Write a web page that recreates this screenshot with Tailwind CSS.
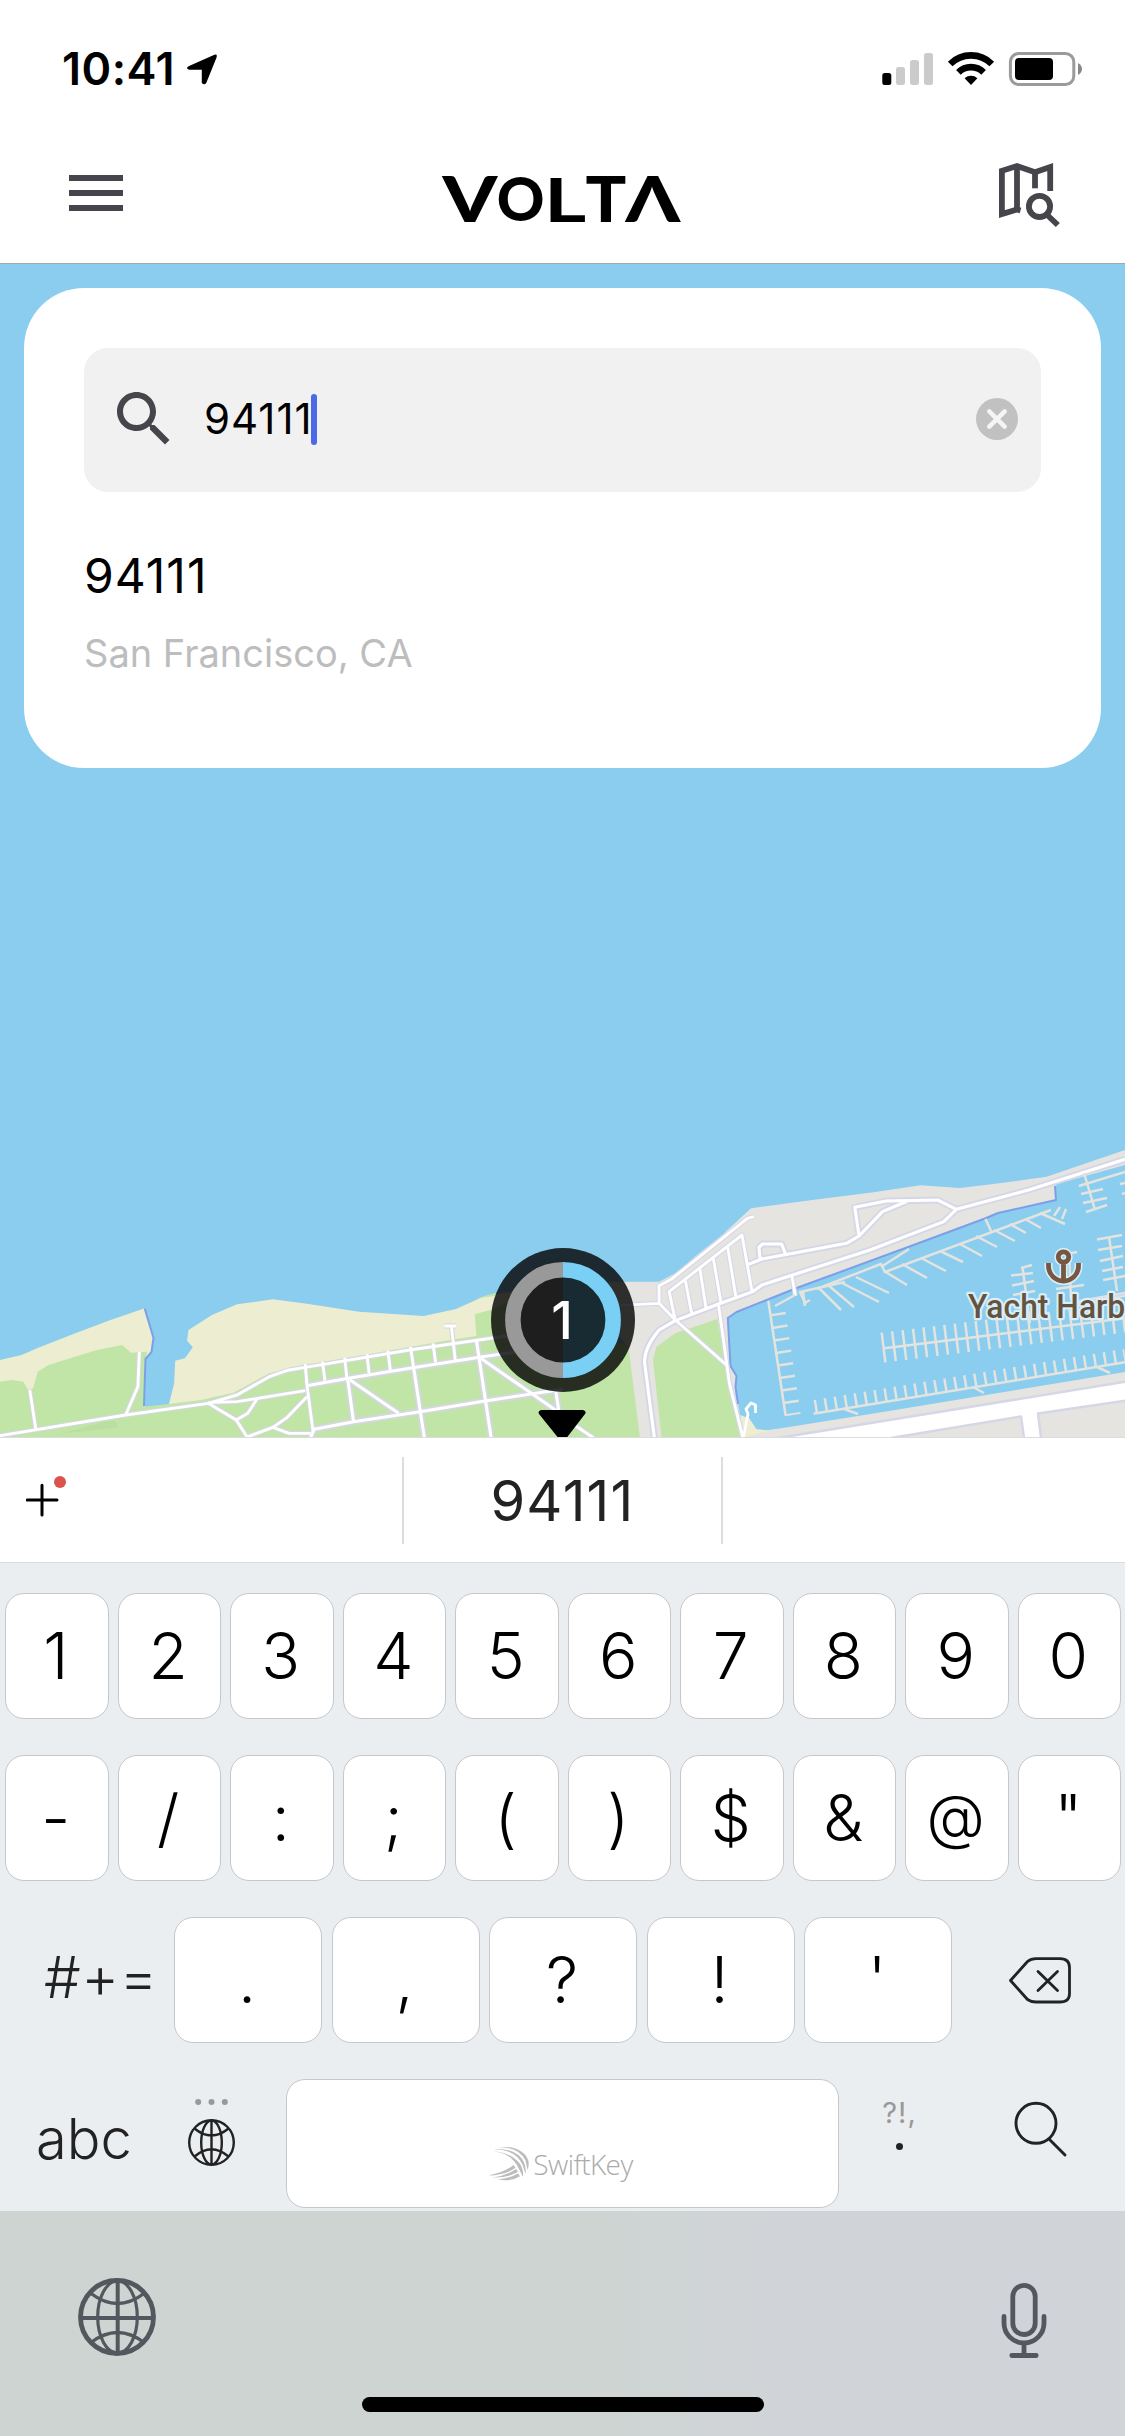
<!DOCTYPE html>
<html lang="en">
<head>
<meta charset="utf-8">
<title>Volta</title>
<script src="https://cdn.jsdelivr.net/npm/@tailwindcss/browser@4"></script>
</head>
<body class="w-[1125px] h-[2436px] overflow-hidden bg-white font-['Inter',sans-serif] text-black flex flex-col">

<!-- Status bar -->
<div class="h-[132px] shrink-0 flex items-start justify-between pl-[62px] pr-[43px]">
  <div class="flex items-start">
    <span class="mt-[42px] h-[54px] leading-[54px] text-[45px] font-semibold tracking-[0.5px]">10:41</span>
    <svg class="ml-[11px] mt-[53px]" width="32" height="32" viewBox="187 53 31 31"><path d="M190 65.5 L214.5 54.6 Q217.6 53.6 216.6 57.3 L206.6 82 Q204.9 84.6 202.3 82 V69.2 H190 Q186 67.5 190 65.5Z"/></svg>
  </div>
  <svg class="mt-[48px]" width="202" height="42" viewBox="880 48 202 42">
    <rect x="882.3" y="73" width="9" height="12" rx="2.5"/>
    <g fill="#cbcbcb"><rect x="896" y="67" width="9" height="18" rx="2.5"/><rect x="910" y="60" width="9" height="25" rx="2.5"/><rect x="924" y="53" width="9" height="32" rx="2.5"/></g>
    <g fill="none" stroke="#000" stroke-width="6.6">
      <path d="M950.2 64 A29.5 29.5 0 0 1 991.8 64"/>
      <path d="M958.4 72.3 A18 18 0 0 1 983.600 72.3"/>
    </g>
    <path d="M964.6 78.3 A9.5 9.5 0 0 1 977.4 78.3 L971 85Z"/>
    <rect x="1010.4" y="53.4" width="63.4" height="31.2" rx="8.5" fill="none" stroke="#9b9b9b" stroke-width="3"/>
    <rect x="1015" y="58" width="38" height="22" rx="4"/>
    <path d="M1078 63 Q1082 65.500 1082 69 Q1082 72.500 1078 75Z" fill="#888"/>
  </svg>
</div>

<!-- App header -->
<header class="h-[132px] shrink-0 flex items-start justify-between pl-[69px] pr-[63px] border-b border-[#a3a7ab]">
  <div class="mt-[43px] w-[54px] flex flex-col gap-[9px]">
    <div class="h-[6px] bg-[#46454b]"></div>
    <div class="h-[6px] bg-[#46454b]"></div>
    <div class="h-[6px] bg-[#46454b]"></div>
  </div>
  <svg class="mt-[18px]" width="250" height="100" viewBox="437 150 250 100" font-family="Lato" font-weight="900" font-size="62">
    <text transform="translate(443.400 221.500) scale(1.26 1)">V</text>
    <text transform="translate(497.700 221.300) scale(.95 .97)">O</text>
    <text transform="translate(545 221.500) scale(1.310 1)" font-weight="700">L</text>
    <text transform="translate(586.500 221.500) scale(1.09 1)">T</text>
    <text transform="translate(626.600 221.500) scale(1.26 1)">Λ</text>
  </svg>
  <svg class="mt-[30px]" width="64" height="68" viewBox="998 162 64 68" fill="none" stroke="#46454b" stroke-width="5.8">
    <path d="M1020.500 210.500 L1017 209.500 L1001.900 214 V170.800 L1017 166 L1035 172.300 L1050.200 167 V191"/>
    <path d="M1017 166 V210"/><path d="M1035 172 V188.300"/>
    <circle cx="1039.500" cy="206.400" r="10.600"/><path d="M1046.700 214.500 L1057.800 225"/>
  </svg>
</header>

<!-- Map -->
<main class="relative h-[1173px] shrink-0 bg-[#8bcdee] overflow-hidden">
  <svg class="absolute inset-0" width="1125" height="1173" viewBox="0 264 1125 1173" fill="none" stroke-linecap="butt" stroke-linejoin="round">
    <!-- western shore -->
    <g transform="translate(0 1130) scale(.35907 .33333)">
      <path fill="#ededd1" d="M0 690 L60 675 110 652 210 610 300 573 403 535 428 620 422 665 405 685 403 925 H0Z"/>
      <path fill="#ededd1" d="M400 925 L470 825 485 760 488 692 515 685 537 652 521 632 525 600 590 555 660 523 760 508 860 522 1000 545 1180 558 1270 537 1350 498 1400 490 1568 450 V925Z"/>
      <path fill="#c0e5a6" d="M0 755 L35 750 65 755 78 780 92 775 105 725 135 705 200 683 270 660 340 645 365 668 410 665 405 690 400 830 470 822 560 810 650 788 750 730 850 706 1000 678 1240 632 1327 618 1322 553 1372 538 1440 500 1568 480 V925 H0Z"/>
      <path fill="#c0e5a6" d="M1330 505 L1380 488 V498Z"/>
      <path fill="#bbdfa1" d="M165 912 L290 875 320 872 330 892 Z"/>
    </g>
    <!-- eastern shore -->
    <g transform="translate(560 1130) scale(.36036 .33333)">
      <path fill="#c0e5a6" d="M-20 640 H230 V925 H-20Z"/>
      <path fill="#e5e4e1" d="M-60 520 L120 455 275 455 320 430 380 375 450 315 530 235 700 210 870 187 1000 166 1110 174 1220 160 1350 140 1568 60 V105 L1375 163 1378 210 1215 250 1180 265 970 350 660 472 490 545 465 565 473 710 490 740 487 770 500 860 510 925 H222 L190 650 150 600Z"/>
      <path fill="#c0e5a6" d="M268 650 L320 610 437 567 470 760 500 925 H282 L258 690Z"/>
      <path fill="#e5e4e1" d="M505 925 L560 903 640 890 900 845 1568 726 V925Z"/>
      <path fill="#ededd1" d="M500 855 L525 865 545 897 580 902 520 920 510 925Z"/>
      <path fill="#e5e4e1" d="M1440 510 L1568 485 V500 L1440 528Z"/>
    </g>
    <g stroke="#7b9fe8" stroke-width="2">
      <path d="M144.700 1308.500 L153.500 1338 151.500 1352 145.500 1359 144 1406"/>
      <path d="M1055 1186 L1056 1200 998 1213 985 1218.500 909.500 1246.500 798 1287.500 736.500 1312 727.800 1318 730.500 1366 736.500 1376 735.500 1387 738 1404"/>
    </g>
    <!-- street grid: casing, then surface -->
    <g id="west" transform="translate(0 1130) scale(.35907 .33333)" stroke="#d3d7de">
      <g id="w"><path vector-effect="non-scaling-stroke" d="M0 917 L350 855 580 820 660 795 750 740 805 720 850 712 1140 660 1430 615 M580 818 L660 815 850 782 M850 702 L855 767 872 905 M898 695 L905 752 M960 683 L966 745 M1022 672 L1028 730 M1080 662 L1087 720 M1143 650 L1152 713 M1206 640 L1213 697 M1257 588 L1268 690 M1238 588 H1270 M580 820 L658 870 688 921 760 892 805 910 H865 M658 870 L690 850 715 808 M760 892 L800 862 855 800 M83 780 L100 900 M388 665 L384 770 350 855"/>
      <path vector-effect="non-scaling-stroke" d="M855 767 L970 745 1150 713 1335 682 1460 662 M862 930 L875 898 985 875 1170 845 1350 813 1568 778 M968 745 L985 878 M1152 713 L1182 925 M1327 632 L1368 925 M975 750 L1110 850 M1335 682 L1560 850 M1548 785 L1556 840"/></g>
    </g>
    <g id="east" transform="translate(560 1130) scale(.36036 .33333)" stroke="#d5d7e6">
      <g id="e"><path vector-effect="non-scaling-stroke" d="M100 530 L275 520 275 467 310 447 520 265 538 260 M275 520 L320 570 462 705 M440 525 L455 640 470 760 508 925 M320 572 L303 485 505 315 533 485 M465 350 L488 500 M425 383 L447 520 M388 415 L405 533 M348 452 L365 548 M643 435 L653 497 M40 885 L95 925"/>
      <path vector-effect="non-scaling-stroke" d="M262 925 L235 700 Q232 655 275 600 L320 572 440 522 535 485 560 465 860 360 1065 275 1100 238 1300 180 1568 88 M1100 238 L1048 210 905 213 818 232 830 318 895 245 965 213 M830 318 L795 340 560 387 523 403 M555 385 L552 352 562 342 H615 L625 370"/></g>
      <path vector-effect="non-scaling-stroke" stroke-width="2" d="M1440 520 L1568 493"/>
    </g>
    <!-- boulevard -->
    <path fill="#fff" stroke="#d5d7e6" stroke-width="2.500" d="M775 1438.500 L1130 1381 V1400 L1038 1413.500 1042 1445 H1025 L1021 1416.500 888 1438.500Z"/>
    <!-- piers -->
    <g stroke="#e3e3df" stroke-width="2.500">
      <path d="M884.300 1348.300 L1125 1318.300 M813.500 1413.800 L1125 1362.300 M768.300 1300.700 L785.600 1415.500 M1084 1173 L1095 1210 M1079 1186 L1125 1172 M1109 1237 L1117 1291 M1022.500 1267 L1030 1323 M1069 1252 L1071 1300"/>
      <path d="M816.500 1289 L881 1264 885 1272 1051 1210 M805 1303 L800 1292 845 1282 M881 1267 L909 1249 M985.500 1219 L991 1231 M775 1306 L795 1295 M844 1409 L858 1414 M973 1387 L984 1393 M1097 1367 L1110 1373"/>
      <path d="M818 1287 L841 1310 M828 1285 L854 1307 M842 1283 L879 1302 M856 1277 L889 1293 M884 1271 L907 1285 M902 1264 L927 1278 M921 1258 L946 1271 M940 1251 L963 1262 M960 1244 L982 1256 M976 1236 L997 1247 M994 1230 L1015 1241 M1010 1224 L1026 1233 M1025 1219 L1041 1228 M1040 1213 L1065 1224 M1054 1216 L1060 1207 M1062 1219 L1066 1209 M805 1303 L810 1300 M805 1306 L803 1291"/>
      <path d="M1081 1194 L1103 1189 M1083 1203 L1107 1198 M1086 1212 L1107 1205 M1120 1184 L1125 1183 M1122 1194 L1125 1193 M1097 1239.500 L1122 1235 M1098 1250 L1122 1246 M1100 1261 L1123 1256 M1102 1271 L1123 1267 M1103 1280 L1125 1276 M1021 1268 L1032 1265 M1011 1275.500 L1033 1273 M1012 1285.500 L1034 1281 M1013 1295 L1035 1291 M1061 1255 L1077 1252 M1056 1289 L1084 1285"/>
      <path stroke-width="30" stroke-dasharray="2.500 8.010" d="M882.300 1347.700 L1125 1317.500"/>
      <path stroke-width="13" stroke-dasharray="2.500 7.600" d="M814.600 1406.500 L1125 1355.300"/>
      <path stroke-width="15.500" stroke-dasharray="2.500 10.150" d="M777.800 1313 L793 1415"/>
    </g>
    <path stroke="#fff" stroke-width="2.800" d="M743.500 1437 L748 1414 746 1409 751 1403 755.500 1405 V1413"/>
    <!-- harbour label -->
    <g font-family="Roboto" font-weight="500" font-size="33" stroke="#d9eef6" stroke-width="4.500" fill="#655341" paint-order="stroke">
      <text transform="translate(968 1317.500) scale(.965 1)">Yacht Harbor</text>
    </g>
    <g fill="none" stroke-linecap="butt">
      <path stroke="#d9eef6" stroke-width="8" d="M1063.500 1262 V1281 M1048.500 1263 V1266 A15 15 0 0 0 1078.500 1266 V1263 M1063.500 1251.800 A5.200 5.200 0 1 0 1063.500 1262.200 A5.200 5.200 0 1 0 1063.500 1251.800"/>
      <path stroke="#765741" stroke-width="4.800" d="M1063.500 1262 V1281 M1048.500 1263 V1266 A15 15 0 0 0 1078.500 1266 V1263 M1063.500 1251.800 A5.200 5.200 0 1 0 1063.500 1262.200 A5.200 5.200 0 1 0 1063.500 1251.800"/>
    </g>
    <!-- station marker -->
    <circle cx="563" cy="1320" r="72" fill="#000" fill-opacity=".8"/>
    <path fill="#1e1e1e" d="M563 1262 A58 58 0 0 0 563 1378Z"/>
    <path fill="#182a32" d="M563 1262 A58 58 0 0 1 563 1378Z"/>
    <path stroke="#999" stroke-width="15.500" d="M563 1269.800 A50.200 50.200 0 0 0 563 1370.200"/>
    <path stroke="#7ad0f4" stroke-width="15.500" d="M563 1269.800 A50.200 50.200 0 0 1 563 1370.200"/>
    <text x="562" y="1339" text-anchor="middle" fill="#fff" font-family="Inter" font-weight="500" font-size="52">1</text>
    <path fill="#000" d="M541 1410 H583 Q587 1411 585 1414 L565 1440 H560 L539 1414 Q537.500 1411 541 1410Z"/>
  </svg>

  <!-- Search card -->
  <section class="relative mt-[24px] mx-[24px] h-[480px] rounded-[60px] bg-white px-[60px] pt-[60px]">
    <div class="h-[144px] w-[957px] rounded-[24px] bg-[#f1f1f1] flex items-center pl-[24px] pr-[23px] pb-[2px]">
      <svg width="72" height="72" viewBox="0 0 24 24" fill="#46454b"><path d="M15.500 14h-.790l-.280-.270C15.410 12.590 16 11.110 16 9.500 16 5.910 13.090 3 9.500 3S3 5.910 3 9.500 5.910 16 9.500 16c1.610 0 3.090-.590 4.230-1.570l.270.280v.790l5 4.990L20.490 19l-4.990-5zm-6 0C7.010 14 5 11.990 5 9.500S7.010 5 9.500 5 14 7.010 14 9.500 11.990 14 9.500 14z"/></svg>
      <span class="ml-[24px] w-[107px] text-[42px] leading-[50px] tracking-[1px]">94111</span>
      <span class="w-[6px] h-[51px] rounded-full bg-[#4c6ae6]"></span>
      <svg class="ml-auto" width="42" height="42" viewBox="0 0 42 42"><circle cx="21" cy="21" r="21" fill="#c1c1c1"/><path d="M13.300 13.300 L28.700 28.700 M28.700 13.300 L13.300 28.700" stroke="#f5f5f5" stroke-width="4.500" stroke-linecap="round"/></svg>
    </div>
    <div class="mt-[54px] h-[60px] leading-[60px] text-[48px] tracking-[1px]">94111</div>
    <div class="mt-[22px] h-[50px] leading-[50px] text-[38px] text-[#bdbdbd]">San Francisco, CA</div>
  </section>
</main>

<!-- Suggestion bar -->
<div class="h-[126px] shrink-0 border-y border-[#dcdcde] flex items-center">
  <div class="w-[402px] h-full pl-[26px]">
    <svg class="mt-[38px]" width="42" height="42" viewBox="26 1476 42 42"><path d="M27.300 1500 H57 M42 1485.300 V1515" stroke="#000" stroke-width="3" stroke-linecap="round"/><circle cx="60" cy="1482" r="6" fill="#dc524d"/></svg>
  </div>
  <div class="w-[321px] h-[87px] border-x-2 border-[#dddddf] leading-[88px] text-center text-[56px] tracking-[1.200px] text-[#222]">94111</div>
</div>

<!-- Keyboard -->
<div class="h-[648px] shrink-0 bg-[#ebeef1] pt-[30px] flex flex-col gap-[36px]">
  <div class="grid grid-cols-10 h-[126px] gap-[9px] pl-[5px] pr-[4px] text-[64px] leading-[124px] font-light text-center [&>div]:pr-[2px]">
    <div class="bg-white rounded-[19px] border border-[#c6c7ca]">1</div>
    <div class="bg-white rounded-[19px] border border-[#c6c7ca]">2</div>
    <div class="bg-white rounded-[19px] border border-[#c6c7ca]">3</div>
    <div class="bg-white rounded-[19px] border border-[#c6c7ca]">4</div>
    <div class="bg-white rounded-[19px] border border-[#c6c7ca]">5</div>
    <div class="bg-white rounded-[19px] border border-[#c6c7ca]">6</div>
    <div class="bg-white rounded-[19px] border border-[#c6c7ca]">7</div>
    <div class="bg-white rounded-[19px] border border-[#c6c7ca]">8</div>
    <div class="bg-white rounded-[19px] border border-[#c6c7ca]">9</div>
    <div class="bg-white rounded-[19px] border border-[#c6c7ca]">0</div>
  </div>
  <div class="grid grid-cols-10 h-[126px] gap-[9px] pl-[5px] pr-[4px] text-[64px] leading-[124px] font-light text-center [&>div]:pr-[2px]">
    <div class="bg-white rounded-[19px] border border-[#c6c7ca]">-</div>
    <div class="bg-white rounded-[19px] border border-[#c6c7ca]">/</div>
    <div class="bg-white rounded-[19px] border border-[#c6c7ca]">:</div>
    <div class="bg-white rounded-[19px] border border-[#c6c7ca]">;</div>
    <div class="bg-white rounded-[19px] border border-[#c6c7ca]">(</div>
    <div class="bg-white rounded-[19px] border border-[#c6c7ca]">)</div>
    <div class="bg-white rounded-[19px] border border-[#c6c7ca]">$</div>
    <div class="bg-white rounded-[19px] border border-[#c6c7ca]">&amp;</div>
    <div class="bg-white rounded-[19px] border border-[#c6c7ca] text-[60px] leading-[120px]">@</div>
    <div class="bg-white rounded-[19px] border border-[#c6c7ca]">"</div>
  </div>
  <div class="flex h-[126px] text-[64px] leading-[124px] font-light text-center">
    <div class="w-[174px] pl-[44px] text-left text-[58px] leading-[120px] tracking-[0.500px] text-[#222]">#+=</div>
    <div class="grid grid-cols-5 gap-[9.500px] w-[778px] [&>div]:pr-[2px]">
      <div class="bg-white rounded-[19px] border border-[#c6c7ca]">.</div>
      <div class="bg-white rounded-[19px] border border-[#c6c7ca]">,</div>
      <div class="bg-white rounded-[19px] border border-[#c6c7ca]">?</div>
      <div class="bg-white rounded-[19px] border border-[#c6c7ca]">!</div>
      <div class="bg-white rounded-[19px] border border-[#c6c7ca]">'</div>
    </div>
    <svg class="ml-[55px] mt-[37px]" width="66" height="52" viewBox="1007 1954 66 52" fill="none" stroke="#222" stroke-width="2.800" stroke-linecap="round" stroke-linejoin="round"><path d="M1010.500 1980.500 L1027.500 1961.500 Q1031 1958.600 1036 1958.600 H1060 Q1069.500 1958.600 1069.500 1967.500 V1993.500 Q1069.500 2002 1060 2002 H1036 Q1031 2002 1027.500 1999.500Z"/><path d="M1038 1971.500 L1057.500 1990.500 M1057.500 1971.500 L1038 1990.500"/></svg>
  </div>
  <div class="flex h-[129px] text-[#222]">
    <div class="w-[174px] pl-[36px] text-[56px] leading-[121px] font-light">abc</div>
    <svg class="mt-[18px]" width="76" height="74" viewBox="174 2097 76 74"><g fill="#999"><circle cx="198.200" cy="2102" r="3"/><circle cx="211.500" cy="2102" r="3"/><circle cx="224.800" cy="2102" r="3"/></g><g fill="none" stroke="#222" stroke-width="2.400"><circle cx="211.500" cy="2142.500" r="22.300"/><ellipse cx="211.500" cy="2142.500" rx="10.300" ry="22"/><path d="M211.500 2120 V2165 M194.500 2128.500 Q211.500 2142.500 228.500 2128.500 M194.500 2156.500 Q211.500 2142 228.500 2156.500"/></g></svg>
    <div class="ml-[36px] w-[553px] bg-white rounded-[19px] border border-[#c6c7ca] flex justify-center items-start pt-[67px] pr-[4px]">
      <svg width="42" height="36" viewBox="0 0 42 36" fill="#bcbcbc"><path d="M0 4.200 Q22 3 31 22 L35 30 Q36 20 29 13.500 Q18 3.500 0 4.200ZM5 2.200 Q27 2 34.500 17.500 L37.500 27 Q39 16 31 8.500 Q21 .5 5 2.200ZM10 .8 Q30 -1 37.500 13.500 L39.500 23 Q43.500 12 34 5 Q24 -2 10 .8ZM0 28.500 Q16 26 25.500 18 L27.500 20.800 Q17 28.500 0 28.500ZM5 30.500 Q19 28.500 28 22 L30 24.800 Q20 31 5 30.500ZM10 32.500 Q21 31.500 30 26.500 L32 29.300 Q23 35 10 32.500Z"/></svg>
      <span class="ml-[3px] mt-[-2px] font-['Open_Sans',sans-serif] font-light text-[28px] leading-[38px] tracking-[-0.600px] text-[#aaa]">SwiftKey</span>
    </div>
    <div class="ml-[15px] w-[91px] flex flex-col items-center pt-[16px]">
      <span class="text-[29px] leading-[36px] tracking-[1px] text-[#999]">?!,</span>
      <span class="mt-[12px] w-[7px] h-[7px] rounded-full bg-[#222]"></span>
    </div>
    <svg class="ml-[65px] mt-[18px]" width="60" height="64" viewBox="1010 2097 60 64" fill="none" stroke="#222" stroke-width="2.900" stroke-linecap="round"><circle cx="1036" cy="2123.300" r="20"/><path d="M1049.500 2139.500 L1065 2155"/></svg>
  </div>
</div>

<!-- System keyboard footer -->
<div class="relative h-[225px] shrink-0 bg-linear-to-r from-[#ced4d1] from-50% via-[#d0d4d7] via-65% to-[#d0d3d8] to-80% flex justify-between items-start pl-[78px] pr-[78px]">
  <svg class="mt-[67px]" width="78" height="78" viewBox="78 2278 78 78" fill="none" stroke="#54575d" stroke-width="3.200"><circle cx="117" cy="2317" r="36.500" stroke-width="4.800"/><ellipse cx="117.500" cy="2317" rx="19.800" ry="36"/><path stroke-width="4" d="M117.700 2280 V2354 M80 2318 H154"/><path d="M91 2293.500 Q117.500 2313.500 144 2293.500 M91 2342.500 Q117.500 2322.500 144 2342.500"/></svg>
  <svg class="mt-[70px]" width="46" height="78" viewBox="1001.500 2281 46 78" fill="none" stroke="#54575d" stroke-width="4.800" stroke-linecap="round"><rect x="1013.300" y="2285.300" width="22.400" height="49.200" rx="11.200"/><path d="M1004.500 2316.500 V2323 A20 20 0 0 0 1044.500 2323 V2316.500 M1024.500 2344 V2355 M1012.300 2355.500 H1036.700"/></svg>
  <div class="absolute left-[362px] bottom-[24px] w-[402px] h-[15px] rounded-full bg-black"></div>
</div>

<script>
  // Streets are drawn twice: a wide casing first, then the white surface above it.
  for (const [group, id] of [['west', 'w'], ['east', 'e']]) {
    const casing = document.getElementById(id);
    const [minor, major] = casing.children;
    const top = casing.cloneNode(true);
    top.removeAttribute('id');
    top.setAttribute('stroke', '#fff');
    minor.setAttribute('stroke-width', '5');
    major.setAttribute('stroke-width', '6.8');
    top.children[0].setAttribute('stroke-width', '2.9');
    top.children[1].setAttribute('stroke-width', '3.1');
    document.getElementById(group).append(top);
  }
</script>
</body>
</html>
